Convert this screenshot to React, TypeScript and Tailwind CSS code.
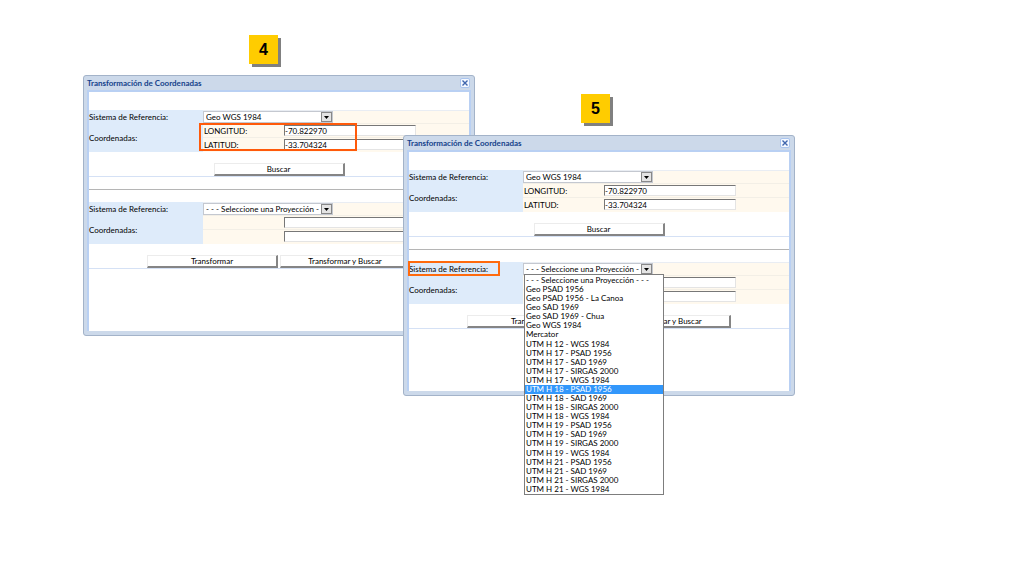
import { useState } from "react";

const PLACEHOLDER = "- - - Seleccione una Proyección - - -";

const projections = [
  PLACEHOLDER,
  "Geo PSAD 1956",
  "Geo PSAD 1956 - La Canoa",
  "Geo SAD 1969",
  "Geo SAD 1969 - Chua",
  "Geo WGS 1984",
  "Mercator",
  "UTM H 12 - WGS 1984",
  "UTM H 17 - PSAD 1956",
  "UTM H 17 - SAD 1969",
  "UTM H 17 - SIRGAS 2000",
  "UTM H 17 - WGS 1984",
  "UTM H 18 - PSAD 1956",
  "UTM H 18 - SAD 1969",
  "UTM H 18 - SIRGAS 2000",
  "UTM H 18 - WGS 1984",
  "UTM H 19 - PSAD 1956",
  "UTM H 19 - SAD 1969",
  "UTM H 19 - SIRGAS 2000",
  "UTM H 19 - WGS 1984",
  "UTM H 21 - PSAD 1956",
  "UTM H 21 - SAD 1969",
  "UTM H 21 - SIRGAS 2000",
  "UTM H 21 - WGS 1984",
];

interface StepBadgeProps {
  step: number;
  className: string;
}

function StepBadge({ step, className }: StepBadgeProps) {
  return (
    <div
      className={`absolute flex size-[29px] items-center justify-center bg-[#ffcc00] font-['Liberation_Sans',sans-serif] text-base font-bold text-black shadow-[3px_3px_0_#808080] ${className}`}
    >
      {step}
    </div>
  );
}

interface ProjectionSelectProps {
  id: string;
  initial: string;
}

function ProjectionSelect({ id, initial }: ProjectionSelectProps) {
  const [value, setValue] = useState(initial);

  return (
    <div className="relative h-3 w-[130px] border border-[#c4c8d0] bg-white">
      <select
        id={id}
        value={value}
        onChange={(e) => setValue(e.target.value)}
        className="block h-full w-full appearance-none overflow-hidden pr-3 pl-0.5 leading-[10px] outline-none"
      >
        {projections.map((name) => (
          <option key={name}>{name}</option>
        ))}
      </select>
      <span className="pointer-events-none absolute inset-y-0 right-0 flex w-[11px] items-center justify-center border border-[#888] bg-[#e4e4e4]">
        <svg viewBox="0 0 5 3" className="h-[3px] w-[5px]" aria-hidden="true">
          <path d="M0 0h5L2.5 3z" fill="#000" />
        </svg>
      </span>
    </div>
  );
}

interface CoordinateRowProps {
  id: string;
  name: string;
  label?: string;
  value: string;
}

function CoordinateRow({ id, name, label, value }: CoordinateRowProps) {
  return (
    <div className="flex h-[14px] items-center border-t border-[#f3efe6]">
      <label htmlFor={id} className="w-[81px] shrink-0 pl-px">
        {label}
      </label>
      <input
        id={id}
        aria-label={name}
        defaultValue={value}
        className="h-[11px] w-[132px] border border-t-[#777] border-r-[#e4e4e4] border-b-[#e4e4e4] border-l-[#777] bg-white leading-[9px] outline-none"
      />
    </div>
  );
}

interface SystemFormProps {
  id: string;
  system: string;
  labels?: [string, string];
  values?: [string, string];
  highlightSystem?: boolean;
  highlightCoordinates?: boolean;
  buttons: string[];
}

function SystemForm({
  id,
  system,
  labels,
  values = ["", ""],
  highlightSystem,
  highlightCoordinates,
  buttons,
}: SystemFormProps) {
  return (
    <form className="border-b border-[#d5e1f5]" onSubmit={(e) => e.preventDefault()}>
      <div className="grid grid-cols-[114px_1fr] bg-[#fff9ee]">
        <div className="relative flex h-[13px] items-center bg-[#deebfa]">
          <label htmlFor={`${id}-system`}>Sistema de Referencia:</label>
          {highlightSystem && (
            <span className="pointer-events-none absolute -top-px -left-px h-[15px] w-[92px] border-2 border-[#ff6a0d]" />
          )}
        </div>
        <div className="border-t border-[#e9edf3]">
          <ProjectionSelect id={`${id}-system`} initial={system} />
        </div>
        <div className="flex h-[29px] items-center bg-[#deebfa]">Coordenadas:</div>
        <div className="relative">
          <CoordinateRow id={`${id}-lon`} name="Longitud" label={labels?.[0]} value={values[0]} />
          <CoordinateRow id={`${id}-lat`} name="Latitud" label={labels?.[1]} value={values[1]} />
          {highlightCoordinates && (
            <span className="pointer-events-none absolute top-0 -left-1 h-7 w-[158px] border-2 border-[#ff5a0a]" />
          )}
        </div>
      </div>
      <div className="flex justify-center gap-0.5 pt-[11px]">
        {buttons.map((name) => (
          <button
            key={name}
            type="button"
            className="h-[13px] w-[131px] border border-t-[#ececec] border-r-2 border-r-[#858585] border-b-2 border-b-[#858585] border-l-[#ececec] bg-white leading-[10px]"
          >
            {name}
          </button>
        ))}
      </div>
    </form>
  );
}

function ProjectionList() {
  const [selected, setSelected] = useState("UTM H 18 - PSAD 1956");

  return (
    <ul
      role="listbox"
      aria-label="Proyección"
      className="absolute top-[138px] left-[120px] grid h-[221px] w-[140px] auto-rows-fr border border-[#7d7d7d] bg-white pt-px"
    >
      {projections.map((name) => (
        <li
          key={name}
          role="option"
          aria-selected={name === selected}
          onClick={() => setSelected(name)}
          className={`px-px leading-[9px] whitespace-nowrap ${
            name === selected ? "bg-[#3297fb] text-white" : ""
          }`}
        >
          {name}
        </li>
      ))}
    </ul>
  );
}

interface TransformWindowProps {
  id: string;
  className: string;
  listOpen?: boolean;
  highlightCoordinates?: boolean;
}

function TransformWindow({ id, className, listOpen, highlightCoordinates }: TransformWindowProps) {
  return (
    <section
      className={`absolute w-[392px] rounded-[3px] border border-[#a3b3c9] bg-[#ccd9ea] px-[3px] pb-1 ${className}`}
    >
      <header className="flex h-[14px] items-center justify-between">
        <h2 className="font-bold text-[#15428b]">Transformación de Coordenadas</h2>
        <button
          type="button"
          aria-label="Cerrar"
          className="mr-px flex size-[10px] items-center justify-center rounded-[2px] border border-[#a9c4ee] bg-[#f4f8ff]"
        >
          <svg viewBox="0 0 6 6" className="size-[6px]" aria-hidden="true">
            <path d="M0.5 0.5l5 5M5.5 0.5l-5 5" stroke="#3f66ad" strokeWidth="1.4" />
          </svg>
        </button>
      </header>
      <div className="h-[241px] border-2 border-b-0 border-[#b9d0f3] bg-white pt-[18px]">
        <SystemForm
          id={`${id}-source`}
          system="Geo WGS 1984"
          labels={["LONGITUD:", "LATITUD:"]}
          values={["-70.822970", "-33.704324"]}
          highlightCoordinates={highlightCoordinates}
          buttons={["Buscar"]}
        />
        <hr className="my-3 border-[#b5b5b5]" />
        <SystemForm
          id={`${id}-target`}
          system={PLACEHOLDER}
          highlightSystem={listOpen}
          buttons={["Transformar", "Transformar y Buscar"]}
        />
      </div>
      {listOpen && <ProjectionList />}
    </section>
  );
}

export default function App() {
  return (
    <main className="relative min-h-screen overflow-hidden bg-white font-['Lato',sans-serif] text-[8px] leading-[10px] text-black">
      <StepBadge step={4} className="top-[35px] left-[249px]" />
      <TransformWindow id="step4" className="top-[75px] left-[83px]" highlightCoordinates />
      <StepBadge step={5} className="top-[94px] left-[581px]" />
      <TransformWindow id="step5" className="top-[135px] left-[403px]" listOpen />
    </main>
  );
}
